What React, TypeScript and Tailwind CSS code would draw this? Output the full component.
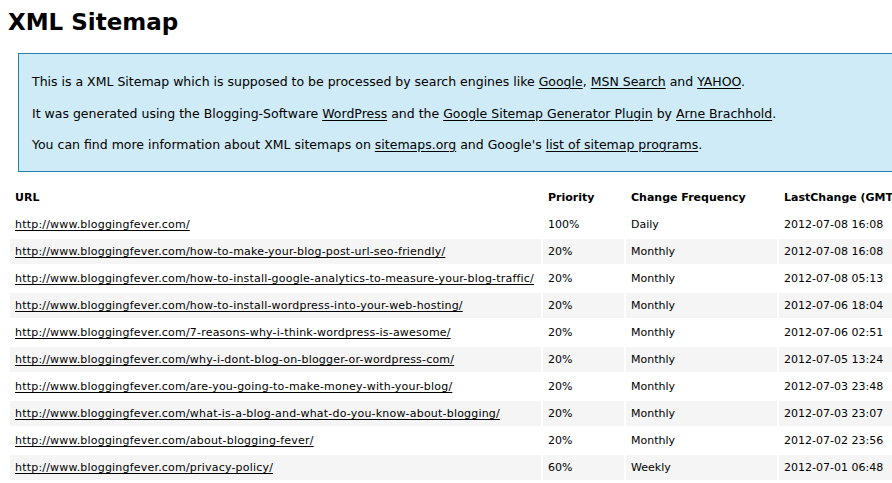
import React from "react";

const rows = [
  ["http://www.bloggingfever.com/", "100%", "Daily", "2012-07-08 16:08"],
  ["http://www.bloggingfever.com/how-to-make-your-blog-post-url-seo-friendly/", "20%", "Monthly", "2012-07-08 16:08"],
  ["http://www.bloggingfever.com/how-to-install-google-analytics-to-measure-your-blog-traffic/", "20%", "Monthly", "2012-07-08 05:13"],
  ["http://www.bloggingfever.com/how-to-install-wordpress-into-your-web-hosting/", "20%", "Monthly", "2012-07-06 18:04"],
  ["http://www.bloggingfever.com/7-reasons-why-i-think-wordpress-is-awesome/", "20%", "Monthly", "2012-07-06 02:51"],
  ["http://www.bloggingfever.com/why-i-dont-blog-on-blogger-or-wordpress-com/", "20%", "Monthly", "2012-07-05 13:24"],
  ["http://www.bloggingfever.com/are-you-going-to-make-money-with-your-blog/", "20%", "Monthly", "2012-07-03 23:48"],
  ["http://www.bloggingfever.com/what-is-a-blog-and-what-do-you-know-about-blogging/", "20%", "Monthly", "2012-07-03 23:07"],
  ["http://www.bloggingfever.com/about-blogging-fever/", "20%", "Monthly", "2012-07-02 23:56"],
  ["http://www.bloggingfever.com/privacy-policy/", "60%", "Weekly", "2012-07-01 06:48"],
];

const A = ({ children }: { children: React.ReactNode }) => (
  <a href="#" className="text-black underline underline-offset-2">
    {children}
  </a>
);

export default function App() {
  return (
    <div
      className="w-[892px] h-[483px] overflow-hidden bg-white text-black"
      style={{ fontFamily: '"DejaVu Sans", Verdana, sans-serif' }}
    >
      <div className="w-[1000px] px-2">
        <h1 className="text-[23px] font-bold leading-[30px] pt-[7px] h-[53px]">XML Sitemap</h1>
        <div className="ml-[10px] border border-[#2580b2] bg-[#cfebf7] pl-[13px] pt-[19px] pb-[17px] text-[12.5px] leading-[18px] flex flex-col gap-[13.5px]">
          <p>
            This is a XML Sitemap which is supposed to be processed by search engines like <A>Google</A>,{" "}
            <A>MSN Search</A> and <A>YAHOO</A>.
          </p>
          <p>
            It was generated using the Blogging-Software <A>WordPress</A> and the{" "}
            <A>Google Sitemap Generator Plugin</A> by <A>Arne Brachhold</A>.
          </p>
          <p>
            You can find more information about XML sitemaps on <A>sitemaps.org</A> and Google's{" "}
            <A>list of sitemap programs</A>.
          </p>
        </div>
        <table className="mt-[11px] border-separate border-spacing-[2px] text-[11px] leading-[15px]">
          <colgroup>
            <col className="w-[531px]" />
            <col className="w-[81px]" />
            <col className="w-[151px]" />
            <col className="w-[160px]" />
          </colgroup>
          <thead>
            <tr>
              <th className="text-left font-bold p-[5px] h-[25px]">URL</th>
              <th className="text-left font-bold p-[5px]">Priority</th>
              <th className="text-left font-bold p-[5px]">Change Frequency</th>
              <th className="text-left font-bold p-[5px] whitespace-nowrap">LastChange (GMT)</th>
            </tr>
          </thead>
          <tbody>
            {rows.map((r, i) => (
              <tr key={i} className={i % 2 === 1 ? "bg-[#f5f5f5]" : ""}>
                <td className="p-[5px] h-[25px] whitespace-nowrap tracking-[0.2px]">
                  <A>{r[0]}</A>
                </td>
                <td className="p-[5px]">{r[1]}</td>
                <td className="p-[5px]">{r[2]}</td>
                <td className="p-[5px] whitespace-nowrap">{r[3]}</td>
              </tr>
            ))}
          </tbody>
        </table>
      </div>
    </div>
  );
}
